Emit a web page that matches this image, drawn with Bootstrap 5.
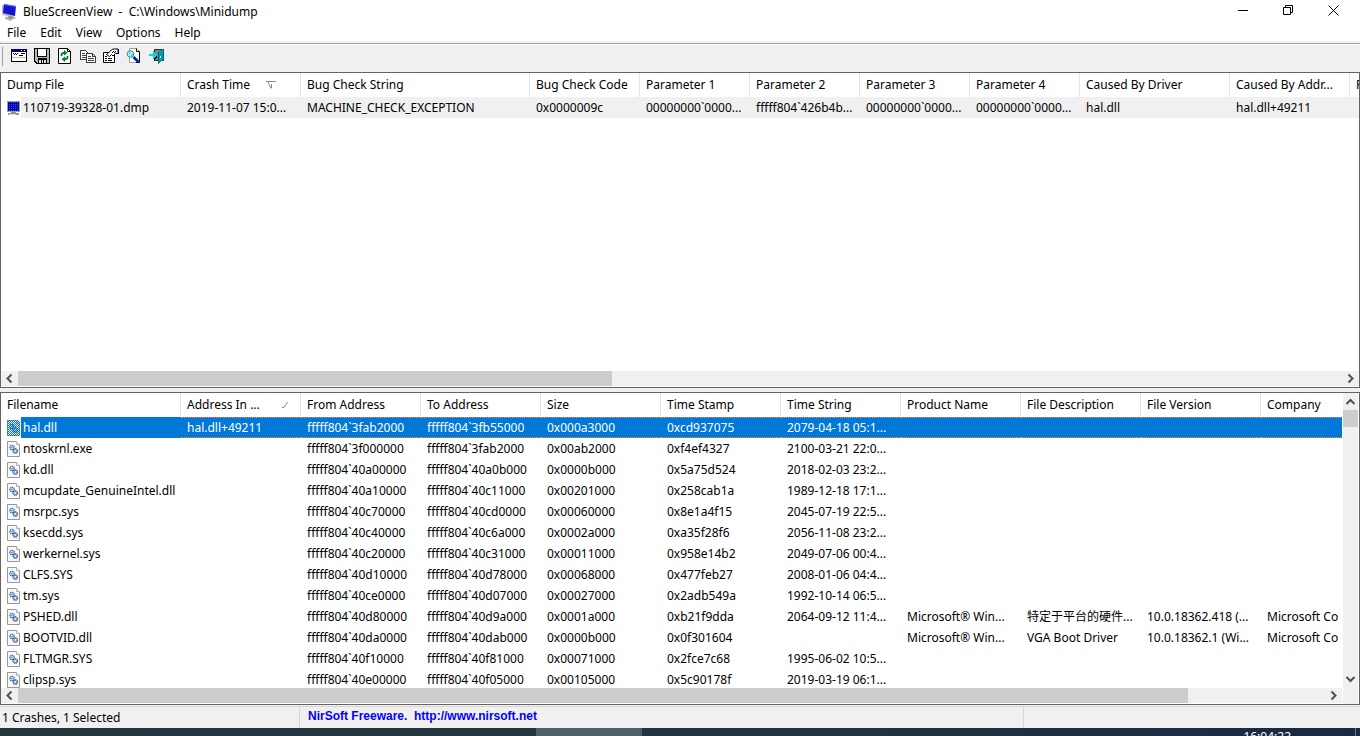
<!DOCTYPE html>
<html lang="en">
<head>
<meta charset="utf-8">
<meta name="viewport" content="width=device-width, initial-scale=1">
<title>BlueScreenView - C:\Windows\Minidump</title>
<link href="https://cdn.jsdelivr.net/npm/bootstrap@5.3.0/dist/css/bootstrap.min.css" rel="stylesheet">
<style>
  body { font: 12px/16px "Noto Sans", "Noto Sans CJK SC", sans-serif; color: #000; background: #f0f0f0; font-variant-ligatures: none; }
  button { border: 0; padding: 0; background: transparent; color: inherit; }
  svg { display: block; flex: none; }
  .title-bar { height: 24px; padding-left: 1px; }
  .title-text { white-space: pre; }
  .win-btn { width: 45px; height: 20px; }
  .menu-bar { height: 17px; }
  .menu-bar button { padding: 0 7px; line-height: 17px; }
  .tool-strip { height: 31px; border-top: 2px solid #f0f0f0; }
  .tool-inner { background: #f0f0f0; border-top: 1px solid #a0a0a0; box-shadow: inset 0 1px #fff; padding: 0 2px 4px; }
  .grip { width: 1px; height: 19px; background: #a0a0a0; margin-right: 4px; }
  .tool-inner button { width: 23px; height: 22px; }
  .pane { border: 1px solid #646464; background: #fff; min-height: 0; flex-basis: 0; }
  .pane-top { flex-grow: 316; margin-bottom: 4px; }
  .pane-bottom { flex-grow: 313; }
  .grid-table { table-layout: fixed; width: 1468px; border-collapse: separate; border-spacing: 0; }
  .grid-table th { height: 24px; padding: 0 0 0 6px; font-weight: 400; border-right: 1px solid #e5e5e5; }
  .grid-table td { height: 21px; padding: 0 0 0 6px; }
  .grid-table th, .grid-table td { white-space: nowrap; overflow: hidden; vertical-align: middle; }
  .pane-bottom .grid-table td { padding-top: 2px; }
  .file-cell { display: flex; align-items: center; height: 19px; }
  .file-cell svg { margin-right: 2px; }
  .row-idle td { background: #f0f0f0; }
  .row-idle td:first-child { background: linear-gradient(90deg, #fff 20px, #f0f0f0 20px); }
  .row-on td { color: #fff; background: #0078d7; border-top: 1px dotted #ff8728; border-bottom: 1px dotted #ff8728; }
  .row-on td:first-child { background: linear-gradient(90deg, #fff 20px, #0078d7 20px); background-clip: border-box; background-origin: border-box; border-color: transparent; }
  .row-on .file-cell { height: 17px; }
  .sort-mark { margin-right: 11px; }
  .bar-h { height: 15px; background: #f0f0f0; margin-bottom: 1px; }
  .bar-h button { width: 17px; height: 15px; }
  .bar-v { width: 15px; background: #f0f0f0; margin-left: 1px; margin-right: 1px; }
  .bar-v button { width: 15px; height: 17px; }
  .thumb { background: #cdcdcd; }
  .status { height: 23px; border-top: 1px solid #f0f0f0; box-shadow: inset 0 1px #d7d7d7; }
  .status-first { width: 300px; padding: 4px 0 0 2px; }
  .status-mid { width: 724px; padding: 2px 0 0 8px; font: bold 12px/16px "Liberation Sans", Arial, sans-serif; }
  .status-mid a { color: #00f; text-decoration: none; white-space: pre; }
  .split { border-right: 1px solid #d7d7d7; }
  .task { height: 8px; background: linear-gradient(90deg, #22383f, #20343f 60%, #1a2844); color: #fff; }
  .task-lead { width: 536px; }
  .task-active { width: 106px; background: #4d5f67; }
  .task-clock { line-height: 16px; padding-top: 1px; margin-right: 64px; }
  .task-edge { width: 1px; background: #6c7688; margin-right: 4px; }
</style>
</head>
<body>
<svg width="0" height="0" class="position-absolute" aria-hidden="true">
  <defs>
    <symbol id="dll" viewBox="0 0 14 16">
      <path d="M.5.5h9l3 3v12H.5z" fill="#f8f8f8" stroke="#989898"/>
      <path d="M9.500.5v3h3" fill="#fff" stroke="#b0b0b0"/>
      <circle cx="5" cy="6.500" r="2.200" fill="#dceaf6" stroke="#2e6395" stroke-width="1.200" stroke-dasharray="1.300 .5"/>
      <circle cx="8.300" cy="10" r="2.200" fill="#9dbad8" stroke="#2e6395" stroke-width="1.300" stroke-dasharray="1.300 .5"/>
      <circle cx="5" cy="6.500" r=".7" fill="#2e6395"/><circle cx="8.300" cy="10" r=".8" fill="#fff"/>
    </symbol>
    <pattern id="dots" width="2" height="2" patternUnits="userSpaceOnUse"><path d="M0 0h1v1H0zM1 1h1v1H1z" fill="#0078d7"/></pattern>
    <pattern id="mesh" width="2" height="2" patternUnits="userSpaceOnUse"><path d="M0 0h1v1H0z" fill="#2c57e0"/></pattern>
    <symbol id="left" viewBox="0 0 17 15"><path d="M10.500 3.500 6.500 7.500l4 4" fill="none" stroke="#505050" stroke-width="2"/></symbol>
    <symbol id="right" viewBox="0 0 17 15"><path d="m6.500 3.500 4 4-4 4" fill="none" stroke="#505050" stroke-width="2"/></symbol>
  </defs>
</svg>

<div class="d-flex flex-column vh-100 overflow-hidden">
  <header class="bg-white">
    <div class="title-bar d-flex">
      <div class="d-flex align-items-center flex-grow-1">
        <svg width="18" height="17" viewBox="0 0 18 17" class="me-1" aria-hidden="true">
          <path d="m4 13 8-1 3 2-6 3-5-2z" fill="#b4b4b4"/><path d="M7 11h4l1 3-4 1z" fill="#888"/>
          <path d="m1 1 12 1 1 1-1 9-3 .5L1 11z" fill="#b8b8c0"/>
          <path d="m3 0 12 2-1 10L2 9z" fill="#1414d8"/><path d="m3 0 12 2v1L3 1z" fill="#6a78e8"/>
        </svg>
        <span class="title-text">BlueScreenView  -  C:\Windows\Minidump</span>
      </div>
      <div class="d-flex">
        <button class="win-btn d-flex align-items-center justify-content-center" aria-label="Minimize"><svg width="11" height="11"><path d="M0 5.500h10" stroke="#000"/></svg></button>
        <button class="win-btn d-flex align-items-center justify-content-center" aria-label="Restore"><svg width="11" height="11" fill="none" stroke="#000"><path d="M.5 2.500h7v7h-7zM2.500 2.500v-2h7v7h-2"/></svg></button>
        <button class="win-btn d-flex align-items-center justify-content-center me-1" aria-label="Close"><svg width="11" height="11"><path d="m.5.5 10 10m0-10-10 10" stroke="#000"/></svg></button>
      </div>
    </div>
    <nav class="menu-bar d-flex" aria-label="Menu">
      <button>File</button><button>Edit</button><button>View</button><button>Options</button><button>Help</button>
    </nav>
    <div class="tool-strip">
      <div class="tool-inner d-flex align-items-center h-100">
        <span class="grip"></span>
        <button class="d-flex align-items-center justify-content-center" aria-label="Advanced options"><svg width="16" height="16" shape-rendering="crispEdges"><path d="M.5 1.500h15v12H.5z" fill="#fff" stroke="#000"/><path d="M0 1h16v3H0z" fill="#000080"/><path d="M2 5h1v1H2zm2 0h1v1H4zm2 0h1v1H6zM3 6h1v1H3zm2 0h1v1H5zm5-1h4v1h-4zM8 7h4v1H8z" fill="#000"/><path d="M1 9h14v1H1z" fill="#c0c0c0"/><path d="M10 2h1v1h-1zm3 0h1v1h-1z" fill="#fff"/></svg></button>
        <button class="d-flex align-items-center justify-content-center" aria-label="Save"><svg width="16" height="16" shape-rendering="crispEdges"><path d="M0 0h16v16H2l-2-2z" fill="#000"/><path d="M1 1h14v14H3l-2-2z" fill="#b8b8b8"/><path d="M3 0h10v9H3z" fill="#000"/><path d="M4 1h8v7H4z" fill="#fff"/><path d="M4 10h9v6H4z" fill="#000"/><path d="M5 12h2v3H5zm3 0h1v3H8zm2 0h2v3h-2z" fill="#e0e0e0"/></svg></button>
        <button class="d-flex align-items-center justify-content-center" aria-label="Refresh"><svg width="16" height="16"><path d="M1.500.5h9l3 3v12h-12z" fill="#fff" stroke="#000"/><path d="M10.500.5v3h3" fill="none" stroke="#000"/><path d="M4.500 8V6.500q0-1.500 2-1.500h1M10.500 8v1.500q0 1.500-2 1.500h-1" fill="none" stroke="#008030" stroke-width="1.800"/><path d="m7 2 3.500 2.800L7 7.600zM8 8.400l-3.500 2.800L8 14z" fill="#008030"/></svg></button>
        <button class="d-flex align-items-center justify-content-center" aria-label="Copy"><svg width="16" height="16" shape-rendering="crispEdges"><g fill="#fff" stroke="#404040"><path d="M.5 2.500h5l3 3v6h-8z"/><path d="M6.500 5.500h6l3 3v6h-9z"/></g><path d="M2 5h3v1H2zm0 2h4v1H2zm0 2h4v1H2zM8 8h3v1H8zm0 2h6v1H8zm0 2h6v1H8zM12 6h1v2h2v1h-3z" fill="#404040"/></svg></button>
        <button class="d-flex align-items-center justify-content-center" aria-label="Properties"><svg width="16" height="16"><path d="M.5 4.500h11v10H.5z" fill="#fff" stroke="#000"/><path d="M3.500 6.500 8 2.500q1-1.500 3-1.500h4v4.500h-2.500L10 8 8.500 6.500l-2 2z" fill="#fff" stroke="#000"/><path d="M10 3h1v1h-1zm2 0h1v1h-1zm-1 1h1v1h-1zM9 4h1v1H9zM2 8h2v1H2zm3 2h4v1H5zm-3 0h2v1H2zm0 2h2v1H2zm3 0h4v1H5z" fill="#000" shape-rendering="crispEdges"/><path d="M15 1h1v5h-1z" fill="#000080"/></svg></button>
        <button class="d-flex align-items-center justify-content-center" aria-label="Find"><svg width="16" height="16"><path d="M3.500.5h7l3 3v11h-10z" fill="#fff" stroke="#a0a0a0"/><path d="M10.500.5v3h3v11H10" fill="none" stroke="#000"/><circle cx="4.500" cy="6" r="3.300" fill="#9ff" stroke="#557b88"/><path d="m3 6 2-2m0 4 2-2" stroke="#20b8d0"/><path d="m7.500 9 5 5" stroke="#0020b0" stroke-width="2.600"/></svg></button>
        <button class="d-flex align-items-center justify-content-center" aria-label="Exit"><svg width="16" height="16" shape-rendering="crispEdges"><path d="M5.500 1.500h9v11h-9z" fill="#808080" stroke="#303030"/><path d="m9 4 5-3v11l-5 4z" fill="#00a0a8"/><path d="M9 4h1v11H9zM14 1h1v12h-1z" fill="#006070"/><path d="M11 8h1v2h-1z" fill="#fff"/><path d="M0 6h4V3l4 4-4 4V8H0z" fill="#00d8e8"/><path d="M4 11 8 7v2l-3 3z" fill="#000"/></svg></button>
      </div>
    </div>
  </header>

  <section class="pane pane-top d-flex flex-column" aria-label="Crashes">
    <div class="flex-grow-1 overflow-hidden">
      <table class="grid-table">
        <colgroup><col style="width:180px"><col style="width:120px"><col style="width:229px"><col style="width:110px"><col style="width:110px"><col style="width:110px"><col style="width:110px"><col style="width:110px"><col style="width:150px"><col style="width:120px"><col></colgroup>
        <thead><tr><th>Dump File</th><th><div class="d-flex align-items-center">Crash Time<svg class="ms-3" width="10" height="8" fill="none" stroke="#888"><path d="M0 .5h10M2 1l3 6.500M5.500 7V3"/></svg></div></th><th>Bug Check String</th><th>Bug Check Code</th><th>Parameter 1</th><th>Parameter 2</th><th>Parameter 3</th><th>Parameter 4</th><th>Caused By Driver</th><th>Caused By Addr...</th><th>File Description</th></tr></thead>
        <tbody><tr class="row-idle"><td><div class="file-cell"><svg width="14" height="16" viewBox="0 0 14 16" shape-rendering="crispEdges"><path d="M0 1h13v11H0z" fill="#9aa0a8"/><path d="M1 2h11v9H1z" fill="#0000b4"/><path d="M1 2h11v9H1z" fill="url(#mesh)"/><path d="M4 12h5v1H4zM1 13h11v2H1z" fill="#8c949c"/><path d="M2 14h7v1H2z" fill="#d8dcdf"/></svg>110719-39328-01.dmp</div></td><td>2019-11-07 15:0...</td><td>MACHINE_CHECK_EXCEPTION</td><td>0x0000009c</td><td>00000000`0000...</td><td>fffff804`426b4b...</td><td>00000000`0000...</td><td>00000000`0000...</td><td>hal.dll</td><td>hal.dll+49211</td><td></td></tr></tbody>
      </table>
    </div>
    <div class="bar-h d-flex">
      <button aria-label="Scroll left"><svg width="17" height="15"><use href="#left"/></svg></button>
      <div class="flex-grow-1"><div class="thumb h-100" style="width:44.9%"></div></div>
      <button aria-label="Scroll right"><svg width="17" height="15"><use href="#right"/></svg></button>
    </div>
  </section>

  <section class="pane pane-bottom d-flex" aria-label="Drivers">
    <div class="d-flex flex-column flex-grow-1 overflow-hidden">
      <div class="flex-grow-1 overflow-hidden">
        <table class="grid-table">
          <colgroup><col style="width:180px"><col style="width:120px"><col style="width:120px"><col style="width:120px"><col style="width:120px"><col style="width:120px"><col style="width:120px"><col style="width:120px"><col style="width:120px"><col style="width:120px"><col></colgroup>
          <thead><tr><th>Filename</th><th><div class="d-flex align-items-center justify-content-between">Address In ...<svg class="sort-mark" width="7" height="8" fill="none" stroke="#888"><path d="M0 6.500h2L5.500 1"/></svg></div></th><th>From Address</th><th>To Address</th><th>Size</th><th>Time Stamp</th><th>Time String</th><th>Product Name</th><th>File Description</th><th>File Version</th><th>Company</th></tr></thead>
          <tbody>
            <tr class="row-on"><td><div class="file-cell"><svg width="14" height="16" viewBox="0 0 14 16"><use href="#dll"/><path d="M0 0h10l3 3v13H0z" fill="url(#dots)" shape-rendering="crispEdges"/></svg>hal.dll</div></td><td>hal.dll+49211</td><td>fffff804`3fab2000</td><td>fffff804`3fb55000</td><td>0x000a3000</td><td>0xcd937075</td><td>2079-04-18 05:1...</td><td></td><td></td><td></td><td></td></tr>
            <tr><td><div class="file-cell"><svg width="14" height="16"><use href="#dll"/></svg>ntoskrnl.exe</div></td><td></td><td>fffff804`3f000000</td><td>fffff804`3fab2000</td><td>0x00ab2000</td><td>0xf4ef4327</td><td>2100-03-21 22:0...</td><td></td><td></td><td></td><td></td></tr>
            <tr><td><div class="file-cell"><svg width="14" height="16"><use href="#dll"/></svg>kd.dll</div></td><td></td><td>fffff804`40a00000</td><td>fffff804`40a0b000</td><td>0x0000b000</td><td>0x5a75d524</td><td>2018-02-03 23:2...</td><td></td><td></td><td></td><td></td></tr>
            <tr><td><div class="file-cell"><svg width="14" height="16"><use href="#dll"/></svg>mcupdate_GenuineIntel.dll</div></td><td></td><td>fffff804`40a10000</td><td>fffff804`40c11000</td><td>0x00201000</td><td>0x258cab1a</td><td>1989-12-18 17:1...</td><td></td><td></td><td></td><td></td></tr>
            <tr><td><div class="file-cell"><svg width="14" height="16"><use href="#dll"/></svg>msrpc.sys</div></td><td></td><td>fffff804`40c70000</td><td>fffff804`40cd0000</td><td>0x00060000</td><td>0x8e1a4f15</td><td>2045-07-19 22:5...</td><td></td><td></td><td></td><td></td></tr>
            <tr><td><div class="file-cell"><svg width="14" height="16"><use href="#dll"/></svg>ksecdd.sys</div></td><td></td><td>fffff804`40c40000</td><td>fffff804`40c6a000</td><td>0x0002a000</td><td>0xa35f28f6</td><td>2056-11-08 23:2...</td><td></td><td></td><td></td><td></td></tr>
            <tr><td><div class="file-cell"><svg width="14" height="16"><use href="#dll"/></svg>werkernel.sys</div></td><td></td><td>fffff804`40c20000</td><td>fffff804`40c31000</td><td>0x00011000</td><td>0x958e14b2</td><td>2049-07-06 00:4...</td><td></td><td></td><td></td><td></td></tr>
            <tr><td><div class="file-cell"><svg width="14" height="16"><use href="#dll"/></svg>CLFS.SYS</div></td><td></td><td>fffff804`40d10000</td><td>fffff804`40d78000</td><td>0x00068000</td><td>0x477feb27</td><td>2008-01-06 04:4...</td><td></td><td></td><td></td><td></td></tr>
            <tr><td><div class="file-cell"><svg width="14" height="16"><use href="#dll"/></svg>tm.sys</div></td><td></td><td>fffff804`40ce0000</td><td>fffff804`40d07000</td><td>0x00027000</td><td>0x2adb549a</td><td>1992-10-14 06:5...</td><td></td><td></td><td></td><td></td></tr>
            <tr><td><div class="file-cell"><svg width="14" height="16"><use href="#dll"/></svg>PSHED.dll</div></td><td></td><td>fffff804`40d80000</td><td>fffff804`40d9a000</td><td>0x0001a000</td><td>0xb21f9dda</td><td>2064-09-12 11:4...</td><td>Microsoft® Win...</td><td lang="zh-CN">特定于平台的硬件...</td><td>10.0.18362.418 (...</td><td>Microsoft Co</td></tr>
            <tr><td><div class="file-cell"><svg width="14" height="16"><use href="#dll"/></svg>BOOTVID.dll</div></td><td></td><td>fffff804`40da0000</td><td>fffff804`40dab000</td><td>0x0000b000</td><td>0x0f301604</td><td></td><td>Microsoft® Win...</td><td>VGA Boot Driver</td><td>10.0.18362.1 (Wi...</td><td>Microsoft Co</td></tr>
            <tr><td><div class="file-cell"><svg width="14" height="16"><use href="#dll"/></svg>FLTMGR.SYS</div></td><td></td><td>fffff804`40f10000</td><td>fffff804`40f81000</td><td>0x00071000</td><td>0x2fce7c68</td><td>1995-06-02 10:5...</td><td></td><td></td><td></td><td></td></tr>
            <tr><td><div class="file-cell"><svg width="14" height="16"><use href="#dll"/></svg>clipsp.sys</div></td><td></td><td>fffff804`40e00000</td><td>fffff804`40f05000</td><td>0x00105000</td><td>0x5c90178f</td><td>2019-03-19 06:1...</td><td></td><td></td><td></td><td></td></tr>
          </tbody>
        </table>
      </div>
      <div class="bar-h d-flex">
        <button aria-label="Scroll left"><svg width="17" height="15"><use href="#left"/></svg></button>
        <div class="flex-grow-1"><div class="thumb h-100" style="width:89.500%"></div></div>
        <button aria-label="Scroll right"><svg width="17" height="15"><use href="#right"/></svg></button>
      </div>
    </div>
    <div class="bar-v d-flex flex-column">
      <button aria-label="Scroll up"><svg width="15" height="17" fill="none" stroke="#505050" stroke-width="2"><path d="m3.500 11 4-4 4 4"/></svg></button>
      <div class="flex-grow-1"><div class="thumb" style="height:17px"></div></div>
      <button class="mb-3" aria-label="Scroll down"><svg width="15" height="17" fill="none" stroke="#505050" stroke-width="2"><path d="m3.500 6 4 4 4-4"/></svg></button>
    </div>
  </section>

  <footer>
    <div class="status d-flex">
      <div class="status-first split">1 Crashes, 1 Selected</div>
      <div class="status-mid split"><a href="http://www.nirsoft.net">NirSoft Freeware.  http://www.nirsoft.net</a></div>
      <div class="flex-grow-1"></div>
    </div>
    <div class="task d-flex overflow-hidden">
      <div class="task-lead"></div><div class="task-active"></div>
      <div class="task-clock ms-auto">16:04:22</div><div class="task-edge"></div>
    </div>
  </footer>
</div>
<script src="https://cdn.jsdelivr.net/npm/bootstrap@5.3.0/dist/js/bootstrap.bundle.min.js"></script>
</body>
</html>
